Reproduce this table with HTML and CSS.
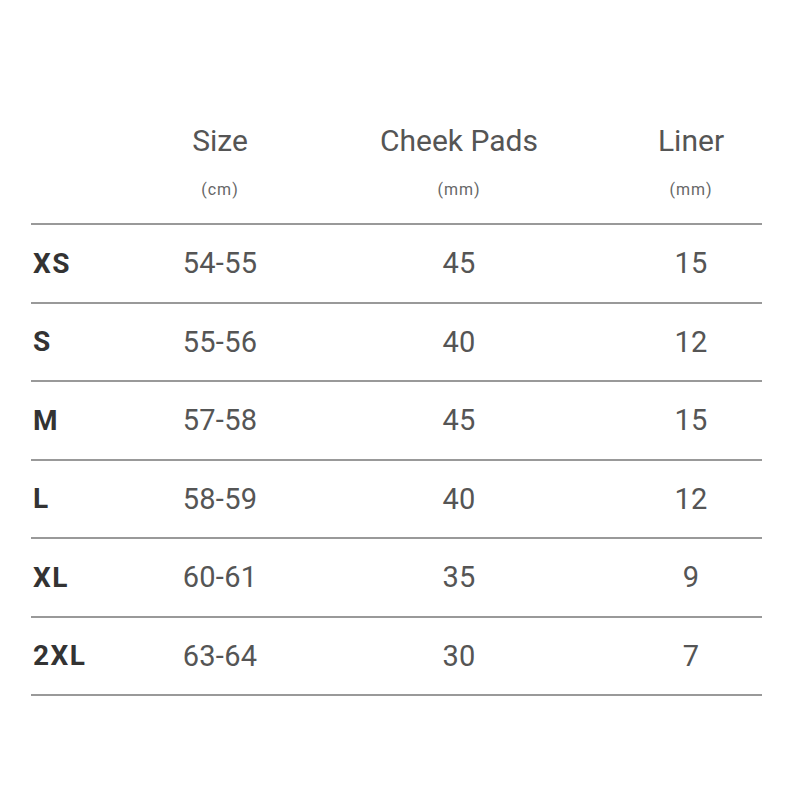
FILE: index.html
```html
<!DOCTYPE html>
<html>
<head>
<meta charset="utf-8">
<link rel="stylesheet" href="styles.css">
</head>
<body>
<div class="page">
  <div class="table">
    <div class="row head">
      <div class="cell label"></div>
      <div class="cell"><span class="title">Size</span><span class="unit">(cm)</span></div>
      <div class="cell"><span class="title">Cheek Pads</span><span class="unit">(mm)</span></div>
      <div class="cell"><span class="title">Liner</span><span class="unit">(mm)</span></div>
    </div>
    <div class="row"><div class="cell label">XS</div><div class="cell">54-55</div><div class="cell">45</div><div class="cell">15</div></div>
    <div class="row"><div class="cell label">S</div><div class="cell">55-56</div><div class="cell">40</div><div class="cell">12</div></div>
    <div class="row"><div class="cell label">M</div><div class="cell">57-58</div><div class="cell">45</div><div class="cell">15</div></div>
    <div class="row"><div class="cell label">L</div><div class="cell">58-59</div><div class="cell">40</div><div class="cell">12</div></div>
    <div class="row"><div class="cell label">XL</div><div class="cell">60-61</div><div class="cell">35</div><div class="cell">9</div></div>
    <div class="row"><div class="cell label">2XL</div><div class="cell">63-64</div><div class="cell">30</div><div class="cell">7</div></div>
  </div>
</div>
</body>
</html>
```

FILE: styles.css
```css
html, body {
  margin: 0;
  padding: 0;
  background: #ffffff;
}
.page {
  padding: 123px 38px 0 31px;
  font-family: Roboto, "Liberation Sans", sans-serif;
}
.table {
  width: 731px;
}
.row {
  display: grid;
  grid-template-columns: 111px 156px 322px 142px;
  height: 78.5px;
  box-sizing: border-box;
  border-bottom: 2px solid #999999;
  align-items: center;
}
.row.head {
  height: 102px;
  align-items: start;
}
.cell {
  text-align: center;
  font-size: 29px;
  color: #555555;
  letter-spacing: 0.3px;
}
.cell.label {
  text-align: left;
  font-weight: 700;
  font-size: 28px;
  color: #333333;
  padding-left: 2px;
  letter-spacing: 1.5px;
}
.head .cell {
  display: flex;
  flex-direction: column;
  align-items: center;
  gap: 21px;
}
.title {
  font-size: 30px;
  line-height: 36px;
  color: #555555;
  letter-spacing: 0;
}
.unit {
  font-size: 16px;
  line-height: 20px;
  color: #666666;
  letter-spacing: 1px;
}
```
